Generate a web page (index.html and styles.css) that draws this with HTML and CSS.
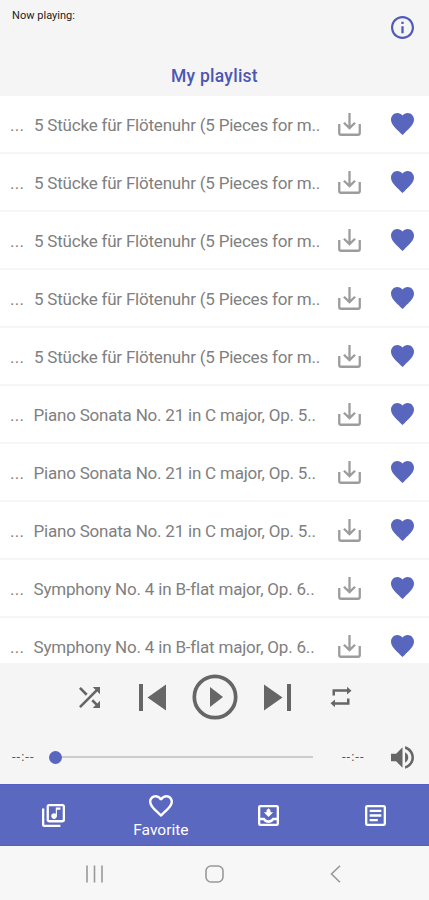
FILE: index.html
```
<!DOCTYPE html>
<html lang="en">
<head>
<meta charset="utf-8">
<title>My playlist</title>
<link rel="stylesheet" href="styles.css">
</head>
<body>
<svg class="defs" aria-hidden="true">
  <symbol id="download" viewBox="0 0 24 24"><path d="M1.300 11.500v9.400q0 1.800 1.800 1.800h17.800q1.800 0 1.800-1.800v-9.400M12 0v15.500M6.200 10.200l5.800 5.600 5.800-5.600" fill="none" stroke="currentColor" stroke-width="2.400"/></symbol>
  <symbol id="heart" viewBox="2 3 20 18.350" preserveAspectRatio="none"><path fill="currentColor" d="M12 21.350l-1.450-1.320C5.400 15.360 2 12.280 2 8.500 2 5.420 4.420 3 7.500 3c1.740 0 3.410.810 4.500 2.090C13.090 3.810 14.760 3 16.500 3 19.580 3 22 5.420 22 8.500c0 3.780-3.400 6.860-8.550 11.540z"/></symbol>
</svg>
<div class="app">
  <header class="header">
    <div class="status">
      <span class="now">Now playing:</span>
      <svg class="info" viewBox="2 2 20 20"><path fill="currentColor" d="M11 7h2v2h-2zm0 4h2v6h-2zm1-9C6.480 2 2 6.480 2 12s4.480 10 10 10 10-4.480 10-10S17.520 2 12 2zm0 18.100c-4.470 0-8.100-3.630-8.100-8.100s3.630-8.100 8.100-8.100 8.100 3.630 8.100 8.100-3.630 8.100-8.100 8.100z"/></svg>
    </div>
    <h1 class="title">My playlist</h1>
  </header>
  <ul class="list">
    <li class="row"><span class="more">...</span><span class="name pieces">5 Stücke für Flötenuhr (5 Pieces for m..</span><svg class="dl"><use href="#download"/></svg><svg class="fav"><use href="#heart"/></svg></li>
    <li class="row"><span class="more">...</span><span class="name pieces">5 Stücke für Flötenuhr (5 Pieces for m..</span><svg class="dl"><use href="#download"/></svg><svg class="fav"><use href="#heart"/></svg></li>
    <li class="row"><span class="more">...</span><span class="name pieces">5 Stücke für Flötenuhr (5 Pieces for m..</span><svg class="dl"><use href="#download"/></svg><svg class="fav"><use href="#heart"/></svg></li>
    <li class="row"><span class="more">...</span><span class="name pieces">5 Stücke für Flötenuhr (5 Pieces for m..</span><svg class="dl"><use href="#download"/></svg><svg class="fav"><use href="#heart"/></svg></li>
    <li class="row"><span class="more">...</span><span class="name pieces">5 Stücke für Flötenuhr (5 Pieces for m..</span><svg class="dl"><use href="#download"/></svg><svg class="fav"><use href="#heart"/></svg></li>
    <li class="row"><span class="more">...</span><span class="name sonata">Piano Sonata No. 21 in C major, Op. 5..</span><svg class="dl"><use href="#download"/></svg><svg class="fav"><use href="#heart"/></svg></li>
    <li class="row"><span class="more">...</span><span class="name sonata">Piano Sonata No. 21 in C major, Op. 5..</span><svg class="dl"><use href="#download"/></svg><svg class="fav"><use href="#heart"/></svg></li>
    <li class="row"><span class="more">...</span><span class="name sonata">Piano Sonata No. 21 in C major, Op. 5..</span><svg class="dl"><use href="#download"/></svg><svg class="fav"><use href="#heart"/></svg></li>
    <li class="row"><span class="more">...</span><span class="name symphony">Symphony No. 4 in B-flat major, Op. 6..</span><svg class="dl"><use href="#download"/></svg><svg class="fav"><use href="#heart"/></svg></li>
    <li class="row"><span class="more">...</span><span class="name symphony">Symphony No. 4 in B-flat major, Op. 6..</span><svg class="dl"><use href="#download"/></svg><svg class="fav"><use href="#heart"/></svg></li>
  </ul>
  <section class="player">
    <div class="controls">
      <svg class="shuffle" viewBox="4 4 16 16"><path fill="currentColor" d="M10.590 9.170L5.410 4 4 5.410l5.170 5.170 1.420-1.410zM14.500 4l2.040 2.040L4 18.590 5.410 20 17.960 7.460 20 9.500V4h-5.500zm.330 9.410l-1.410 1.410 3.130 3.130L14.500 20H20v-5.500l-2.040 2.040-3.130-3.130z"/></svg>
      <svg class="skip prev" viewBox="0 0 27 27"><path fill="currentColor" d="M0 0h4v27H0zM27 .5v26L8.500 13.500z"/></svg>
      <svg class="play" viewBox="0 0 46 46"><circle cx="23" cy="23" r="20.700" fill="none" stroke="currentColor" stroke-width="3.700"/><path fill="currentColor" d="M18 13v20l13-10z"/></svg>
      <svg class="skip next" viewBox="0 0 27 27"><path fill="currentColor" d="M23 0h4v27h-4zM0 .5v26l18.500-13z"/></svg>
      <svg class="repeat" viewBox="0 0 22 22"><path fill="currentColor" d="M2.500 9.500V3.200H17V.8l4.500 3.900L17 8.600V5.800H5v3.700zM19.500 12.500v6.300H5v2.400L.5 17.300 5 13.400v2.800h12v-3.700z"/></svg>
    </div>
    <div class="progress">
      <span class="time">--:--</span>
      <div class="slider"><span class="thumb"></span><span class="track"></span></div>
      <span class="time end">--:--</span>
      <svg class="volume" viewBox="3 3.200 18 17.600"><path fill="currentColor" d="M3 9v6h4l5 5V4L7 9H3zm13.500 3c0-1.770-1.020-3.290-2.500-4.030v8.050c1.480-.730 2.500-2.250 2.500-4.020zM14 3.230v2.060c2.890.860 5 3.540 5 6.710s-2.110 5.850-5 6.710v2.060c4.010-.910 7-4.490 7-8.770s-2.990-7.860-7-8.770z"/></svg>
    </div>
  </section>
  <nav class="tabs">
    <div class="tab"><svg class="library" viewBox="2 2 20 20"><path fill="currentColor" d="M20 2H8c-1.100 0-2 .9-2 2v12c0 1.100.9 2 2 2h12c1.100 0 2-.9 2-2V4c0-1.100-.9-2-2-2zm0 14H8V4h12v12zm-7.500-1c1.380 0 2.500-1.120 2.500-2.500V7h3V5h-4v5.510c-.420-.320-.930-.510-1.500-.510-1.380 0-2.500 1.120-2.500 2.500s1.120 2.500 2.500 2.500zM4 6H2v14c0 1.100.9 2 2 2h14v-2H4V6z"/></svg></div>
    <div class="tab active"><svg class="favorite" viewBox="2 3 20 18.350"><path fill="currentColor" d="M16.500 3c-1.740 0-3.410.810-4.500 2.090C10.910 3.810 9.240 3 7.500 3 4.420 3 2 5.420 2 8.500c0 3.780 3.400 6.860 8.550 11.540L12 21.350l1.450-1.320C18.600 15.360 22 12.280 22 8.500 22 5.420 19.580 3 16.500 3zm-4.400 15.550l-.1.100-.1-.1C7.140 14.240 4 11.390 4 8.500 4 6.500 5.500 5 7.500 5c1.540 0 3.040.990 3.570 2.360h1.870C13.460 5.990 14.960 5 16.500 5c2 0 3.500 1.500 3.500 3.500 0 2.890-3.140 5.740-7.900 10.050z"/></svg><span>Favorite</span></div>
    <div class="tab"><svg class="box" viewBox="3 3 18 18"><path fill="currentColor" fill-rule="evenodd" d="M5 3h14a2 2 0 0 1 2 2v14a2 2 0 0 1-2 2H5a2 2 0 0 1-2-2V5a2 2 0 0 1 2-2zM5 5v9h3.600c.7 1.200 1.900 2 3.400 2s2.700-.8 3.400-2H19V5zM5 16v3h14v-3h-2.500a5.500 5.500 0 0 1-9 0zM12 5.800l1.700 1.700v1.700H16l-4 4-4-4h2.300V7.500z"/></svg></div>
    <div class="tab"><svg class="box" viewBox="3 3 18 18"><path fill="currentColor" fill-rule="evenodd" d="M5 3h14a2 2 0 0 1 2 2v14a2 2 0 0 1-2 2H5a2 2 0 0 1-2-2V5a2 2 0 0 1 2-2zM5 5v14h14V5zM7 7h10v2H7zM7 11h10v2H7zM7 15h7v2H7z"/></svg></div>
  </nav>
  <footer class="system">
    <svg class="recents" viewBox="0 0 17 18"><path d="M1 .5v17M8.500 .5v17M16 .5v17" stroke="currentColor" stroke-width="1.600"/></svg>
    <svg class="home" viewBox="0 0 19 18"><rect x="1" y="1" width="17" height="16" rx="5" fill="none" stroke="currentColor" stroke-width="1.600"/></svg>
    <svg class="back" viewBox="0 0 11 18"><path d="M10 .7L1.500 9l8.500 8.300" fill="none" stroke="currentColor" stroke-width="1.600"/></svg>
  </footer>
</div>
</body>
</html>
```
FILE: styles.css
```
* { box-sizing: border-box; }
body { margin: 0; font-family: Roboto, "Noto Sans", sans-serif; background: #f5f5f5; }
svg { display: block; flex: none; }
.defs { display: none; }
.app { display: flex; flex-direction: column; width: 429px; height: 900px; overflow: hidden; }
.header { height: 96px; flex: none; }
.status { display: flex; justify-content: space-between; padding: 9px 15px 0 12px; height: 64px; }
.now { font-size: 11px; line-height: 14px; color: #222; letter-spacing: 0.03px; white-space: nowrap; }
.info { width: 23px; height: 23px; margin-top: 7px; color: #4f5bb8; }
.title { margin: 0; font-size: 17.500px; line-height: 24px; font-weight: 500; text-align: center; color: #4c57b3; letter-spacing: 0.25px; }
.list { list-style: none; margin: 0; padding: 0; height: 567px; flex: none; overflow: hidden; background: #fff; }
.row { display: flex; align-items: center; height: 58px; border-bottom: 2px solid #f6f6f6; padding: 0 15px 0 10px; color: #808080; font-size: 17px; white-space: nowrap; }
.more, .name { padding-top: 2px; }
.more { width: 24px; flex: none; letter-spacing: 0.3px; }
.name { flex: 1; min-width: 0; }
.pieces { letter-spacing: -0.210px; }
.sonata { letter-spacing: -0.210px; margin-left: -0.5px; }
.symphony { letter-spacing: -0.190px; margin-left: -0.5px; }
.dl { width: 23px; height: 23px; color: #9c9c9c; margin-right: 30.500px; }
.fav { width: 23px; height: 22px; color: #5866be; }
.player { height: 121px; flex: none; color: #666; }
.controls { display: flex; align-items: center; height: 68px; padding-left: 79px; }
.shuffle { width: 21px; height: 21px; }
.skip { width: 27px; height: 27px; }
.prev { margin-left: 39px; }
.play { width: 46px; height: 46px; margin: 0 26px 0 25.500px; }
.repeat { width: 22px; height: 22px; margin-left: 39px; }
.progress { display: flex; align-items: center; height: 53px; padding: 0 15px 1px 12px; }
.time { width: 37px; font-size: 13px; line-height: 16px; letter-spacing: 1px; color: #555; flex: none; }
.slider { display: flex; align-items: center; width: 264px; }
.thumb { width: 13px; height: 13px; border-radius: 50%; background: #5866be; }
.track { flex: 1; height: 2px; background: #ccc; }
.end { margin-left: 29px; }
.volume { width: 23px; height: 23px; margin-left: auto; }
.tabs { display: grid; grid-template-columns: repeat(4, 1fr); height: 62px; flex: none; background: #5b68c0; border-top: 1px solid #5260c0; border-bottom: 1px solid #5260c0; color: #fff; }
.tab { display: flex; flex-direction: column; align-items: center; justify-content: center; font-size: 15.500px; line-height: 20px; }
.active { justify-content: flex-start; padding-top: 10px; gap: 3px; }
.library { width: 23px; height: 23px; }
.favorite { width: 24px; height: 22px; }
.box { width: 21px; height: 21px; }
.system { display: flex; flex: 1; align-items: center; padding: 1px 0 0 86px; color: #999; background: #f7f7f7; }
.recents { width: 17px; height: 18px; }
.home { width: 19px; height: 18px; margin: 0 106px 0 102px; }
.back { width: 11px; height: 18px; }
```
